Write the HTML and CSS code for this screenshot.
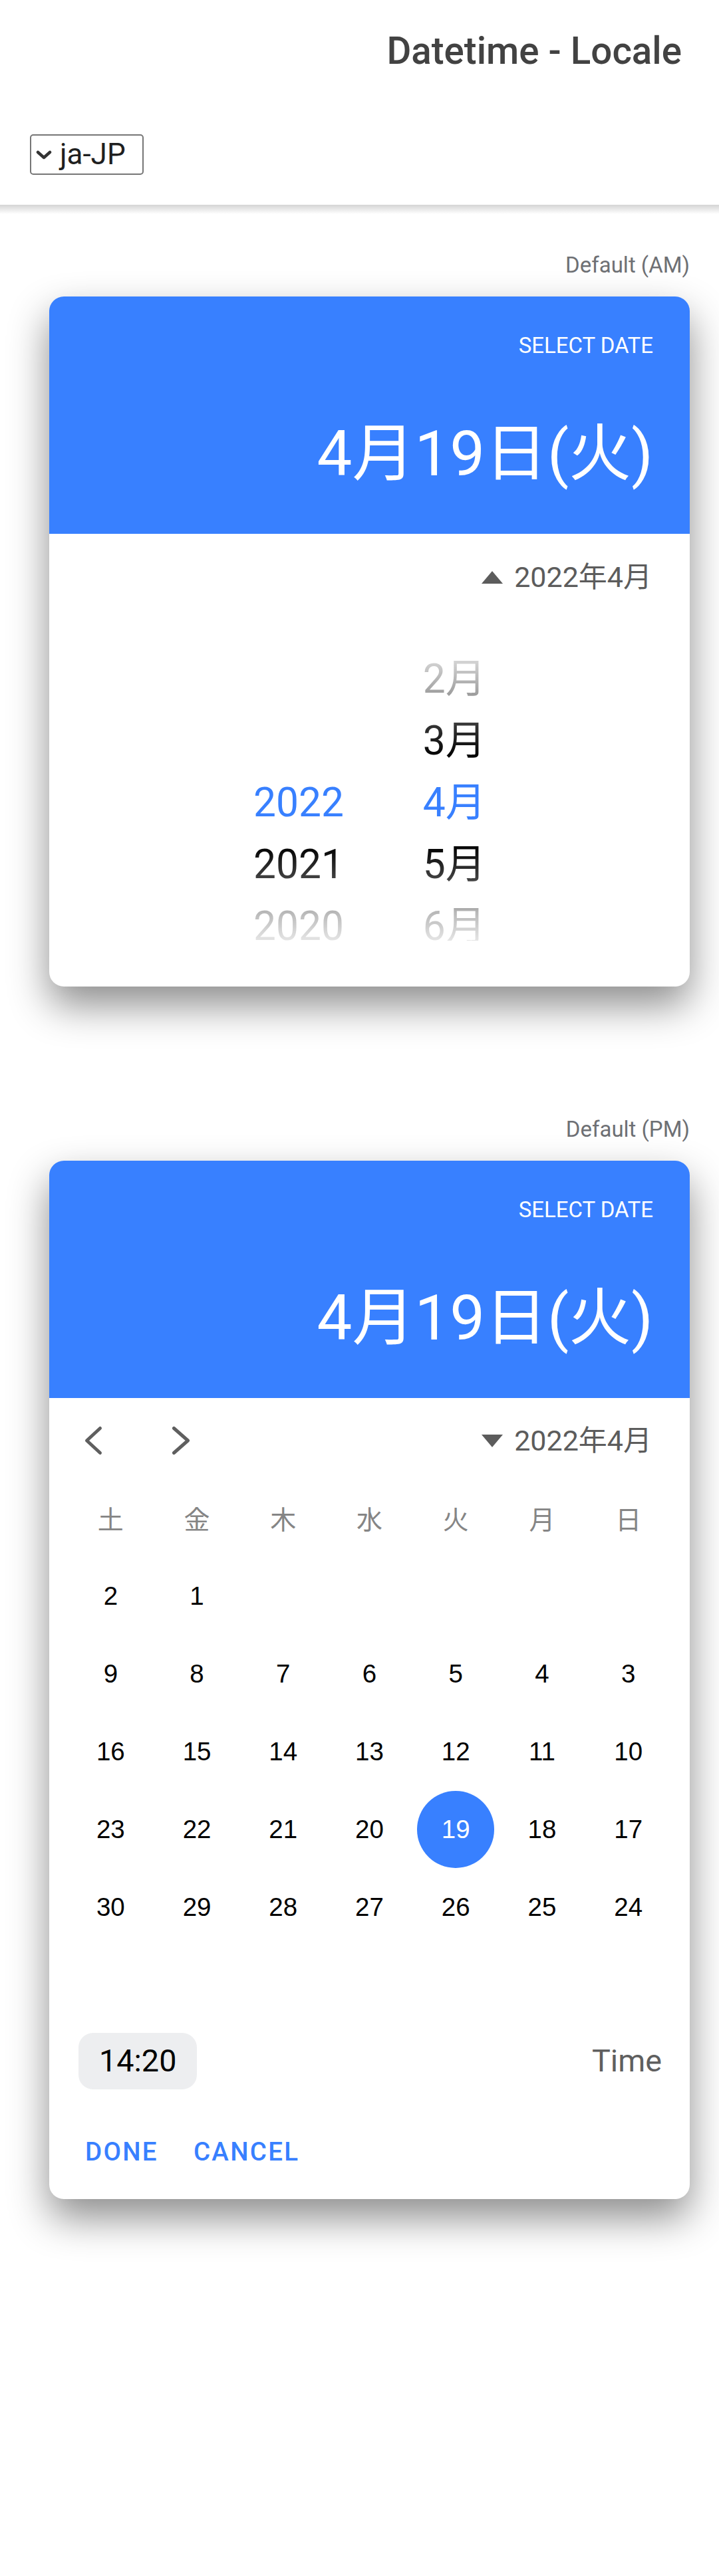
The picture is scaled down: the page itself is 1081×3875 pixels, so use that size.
FILE: index.html
```html
<!DOCTYPE html>
<html lang="ja">
<head>
<meta charset="utf-8">
<title>Datetime - Locale</title>
<link rel="stylesheet" href="styles.css">
</head>
<body>
<header class="app-header">
  <div class="toolbar toolbar-title">
    <h1 class="title">Datetime - Locale</h1>
  </div>
  <div class="toolbar toolbar-select">
    <div class="select">
      <svg class="select-caret" viewBox="0 0 24 14"><polyline points="3,3 12,11 21,3" fill="none" stroke="#333" stroke-width="4.5" stroke-linecap="round" stroke-linejoin="round"/></svg>
      <span class="select-value">ja-JP</span>
    </div>
  </div>
</header>

<main class="content">
  <section class="demo">
    <div class="demo-label">Default (AM)</div>
    <div class="datetime">
      <div class="dt-header">
        <div class="dt-title">SELECT DATE</div>
        <div class="dt-selected">4月19日(火)</div>
      </div>
      <div class="dt-body dt-body-wheel">
        <div class="cal-header cal-header-end">
          <div class="month-toggle">
            <svg class="tri" viewBox="0 0 32 19"><polygon points="16,0 32,19 0,19" fill="#5c5c5c"/></svg>
            <span>2022年4月</span>
          </div>
        </div>
        <div class="wheel">
          <div class="wheel-col">
            <div class="wheel-item"></div>
            <div class="wheel-item"></div>
            <div class="wheel-item active">2022</div>
            <div class="wheel-item">2021</div>
            <div class="wheel-item">2020</div>
          </div>
          <div class="wheel-col">
            <div class="wheel-item">2月</div>
            <div class="wheel-item">3月</div>
            <div class="wheel-item active">4月</div>
            <div class="wheel-item">5月</div>
            <div class="wheel-item">6月</div>
          </div>
        </div>
      </div>
    </div>
  </section>

  <section class="demo">
    <div class="demo-label">Default (PM)</div>
    <div class="datetime">
      <div class="dt-header">
        <div class="dt-title">SELECT DATE</div>
        <div class="dt-selected">4月19日(火)</div>
      </div>
      <div class="dt-body dt-body-cal">
        <div class="cal-header cal-header-nav">
          <div class="nav">
            <svg class="chev" viewBox="0 0 32 48"><polyline points="25.5,5.5 5.5,24 25.5,42.5" fill="none" stroke="#5f5f5f" stroke-width="5" stroke-linecap="round" stroke-linejoin="round"/></svg>
            <svg class="chev" viewBox="0 0 32 48"><polyline points="7.5,5.5 28.5,24 7.5,42.5" fill="none" stroke="#5f5f5f" stroke-width="5" stroke-linecap="round" stroke-linejoin="round"/></svg>
          </div>
          <div class="month-toggle">
            <svg class="tri" viewBox="0 0 32 19"><polygon points="0,0 32,0 16,19" fill="#5c5c5c"/></svg>
            <span>2022年4月</span>
          </div>
        </div>
        <div class="weekdays">
          <div>土</div><div>金</div><div>木</div><div>水</div><div>火</div><div>月</div><div>日</div>
        </div>
        <div class="days">
          <div class="day"><span>2</span></div>
          <div class="day"><span>1</span></div>
          <div class="day"></div>
          <div class="day"></div>
          <div class="day"></div>
          <div class="day"></div>
          <div class="day"></div>

          <div class="day"><span>9</span></div>
          <div class="day"><span>8</span></div>
          <div class="day"><span>7</span></div>
          <div class="day"><span>6</span></div>
          <div class="day"><span>5</span></div>
          <div class="day"><span>4</span></div>
          <div class="day"><span>3</span></div>

          <div class="day"><span>16</span></div>
          <div class="day"><span>15</span></div>
          <div class="day"><span>14</span></div>
          <div class="day"><span>13</span></div>
          <div class="day"><span>12</span></div>
          <div class="day"><span>11</span></div>
          <div class="day"><span>10</span></div>

          <div class="day"><span>23</span></div>
          <div class="day"><span>22</span></div>
          <div class="day"><span>21</span></div>
          <div class="day"><span>20</span></div>
          <div class="day selected"><span>19</span></div>
          <div class="day"><span>18</span></div>
          <div class="day"><span>17</span></div>

          <div class="day"><span>30</span></div>
          <div class="day"><span>29</span></div>
          <div class="day"><span>28</span></div>
          <div class="day"><span>27</span></div>
          <div class="day"><span>26</span></div>
          <div class="day"><span>25</span></div>
          <div class="day"><span>24</span></div>
        </div>
        <div class="time-row">
          <div class="time-btn">14:20</div>
          <div class="time-label">Time</div>
        </div>
        <div class="actions">
          <span class="action">DONE</span>
          <span class="action">CANCEL</span>
        </div>
      </div>
    </div>
  </section>
</main>
</body>
</html>
```

FILE: styles.css
```css
* {
  box-sizing: border-box;
}

html,
body {
  margin: 0;
  background: #ffffff;
}

body {
  width: 1081px;
  min-height: 3875px;
  font-family: Roboto, "Noto Sans CJK JP", sans-serif;
  color: #000;
}

/* ---------- app header ---------- */
.app-header {
  position: relative;
  background: #ffffff;
  z-index: 2;
}

.app-header::after {
  content: "";
  position: absolute;
  left: 0;
  right: 0;
  top: 100%;
  height: 14px;
  background: linear-gradient(to bottom, rgba(0, 0, 0, 0.17), rgba(0, 0, 0, 0));
}

.toolbar {
  height: 154px;
  display: flex;
}

.toolbar-title {
  justify-content: flex-end;
  align-items: center;
  padding-right: 56px;
}

.title {
  margin: 0;
  font-size: 56.5px;
  font-weight: 500;
  line-height: 154px;
  color: #424242;
}

.toolbar-select {
  align-items: flex-start;
  padding: 48px 0 0 45px;
}

.select {
  width: 171px;
  height: 61px;
  border: 2px solid #767676;
  border-radius: 5px;
  display: flex;
  align-items: center;
  gap: 12px;
  padding-left: 7px;
  font-size: 44px;
  line-height: 57px;
  color: #1f1f1f;
}

.select-caret {
  width: 24px;
  height: 14px;
  flex: none;
}

/* ---------- content ---------- */
.content {
  padding: 71px 44px 0 74px;
}

.demo + .demo {
  margin-top: 195px;
}

.demo-label {
  text-align: right;
  font-size: 33px;
  line-height: 40px;
  color: #6e7074;
  margin-bottom: 27px;
}

.datetime {
  background: #ffffff;
  border-radius: 22px;
  overflow: hidden;
  box-shadow: 0 28px 60px rgba(0, 0, 0, 0.45);
}

.dt-header {
  height: 357px;
  background: #3880ff;
  color: #ffffff;
  text-align: right;
  padding: 54px 55px 0;
}

.dt-title {
  font-size: 33px;
  line-height: 40px;
}

.dt-selected {
  margin-top: 88px;
  font-size: 94px;
  line-height: 110px;
}

/* ---------- calendar header ---------- */
.cal-header {
  height: 60px;
  display: flex;
  align-items: center;
  padding: 0 57px 0 51px;
}

.cal-header-end {
  margin-top: 35px;
  justify-content: flex-end;
}

.cal-header-nav {
  margin-top: 34px;
  justify-content: space-between;
}

.nav {
  display: flex;
  gap: 97px;
}

.chev {
  width: 32px;
  height: 48px;
  display: block;
}

.month-toggle {
  display: flex;
  align-items: center;
  gap: 17px;
  font-size: 43px;
  line-height: 60px;
  color: #5c5c5c;
}

.tri {
  width: 32px;
  height: 19px;
  display: block;
}

/* ---------- wheel ---------- */
.dt-body-wheel {
  padding-bottom: 69px;
}

.wheel {
  margin-top: 42px;
  height: 475px;
  overflow: hidden;
  display: flex;
  gap: 54px;
  padding: 35px 0 0 285px;
  -webkit-mask-image: linear-gradient(to bottom,
      rgba(0, 0, 0, 0.03) 0%,
      rgba(0, 0, 0, 0.18) 12%,
      rgba(0, 0, 0, 0.38) 22%,
      rgba(0, 0, 0, 0.8) 32%,
      #000 42%,
      #000 70%,
      rgba(0, 0, 0, 0.73) 81%,
      rgba(0, 0, 0, 0.28) 91%,
      rgba(0, 0, 0, 0.1) 100%);
  mask-image: linear-gradient(to bottom,
      rgba(0, 0, 0, 0.03) 0%,
      rgba(0, 0, 0, 0.18) 12%,
      rgba(0, 0, 0, 0.38) 22%,
      rgba(0, 0, 0, 0.8) 32%,
      #000 42%,
      #000 70%,
      rgba(0, 0, 0, 0.73) 81%,
      rgba(0, 0, 0, 0.28) 91%,
      rgba(0, 0, 0, 0.1) 100%);
}

.wheel-col {
  width: 180px;
  flex: none;
  text-align: center;
  font-size: 60.5px;
}

.wheel-item {
  height: 93px;
  line-height: 93px;
  color: #000;
  white-space: nowrap;
}

.wheel-item.active {
  color: #3880ff;
}

/* ---------- calendar grid ---------- */
.weekdays {
  margin-top: 61px;
  padding: 0 27.5px;
  display: grid;
  grid-template-columns: repeat(7, 1fr);
  font-family: "Noto Sans CJK JP", sans-serif;
  font-size: 39px;
  line-height: 50px;
  color: #858585;
  text-align: center;
}

.days {
  margin-top: 34.5px;
  padding: 0 27.5px;
  display: grid;
  grid-template-columns: repeat(7, 1fr);
  grid-auto-rows: 117px;
  font-family: "Liberation Sans", Arial, sans-serif;
  font-size: 38.5px;
  color: #000;
}

.day {
  display: flex;
  align-items: center;
  justify-content: center;
}

.day.selected span {
  width: 115.5px;
  height: 115.5px;
  border-radius: 50%;
  background: #3880ff;
  color: #ffffff;
  display: flex;
  align-items: center;
  justify-content: center;
}

/* ---------- time + actions ---------- */
.time-row {
  margin-top: 130.5px;
  display: flex;
  justify-content: space-between;
  align-items: center;
  padding: 0 42px 0 44px;
}

.time-btn {
  height: 85px;
  padding: 0 31px;
  border-radius: 22px;
  background: #edeef0;
  font-size: 46.75px;
  line-height: 85px;
  color: #000;
}

.time-label {
  font-size: 46.75px;
  line-height: 85px;
  color: #5f5f5f;
}

.actions {
  margin-top: 69px;
  padding: 0 0 46px 54px;
  display: flex;
  gap: 53px;
}

.action {
  font-size: 38.5px;
  font-weight: 500;
  letter-spacing: 2.3px;
  line-height: 50px;
  color: #3880ff;
}
```
